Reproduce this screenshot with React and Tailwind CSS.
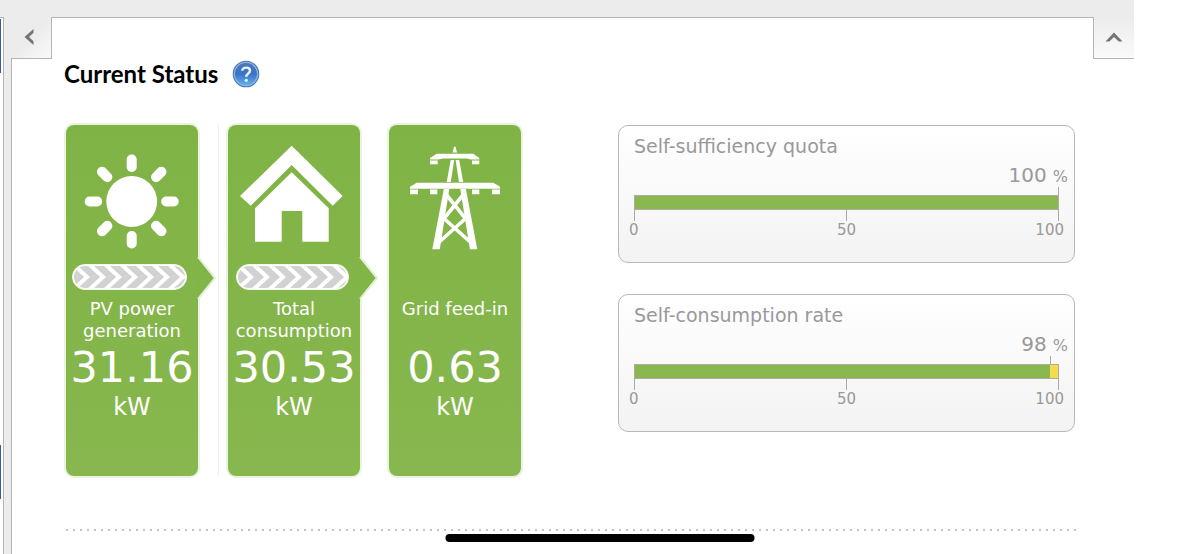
import React from 'react';

const SunIcon = () => (
  <svg viewBox="0 0 132 139" className="w-full" fill="#fff" aria-hidden="true">
    <circle cx="65.7" cy="76.5" r="25.4" />
    {[0, 45, 90, 135, 180, 225, 270, 315].map((angle) => (
      <rect
        key={angle}
        x="60.7"
        y="29.5"
        width="10"
        height="17.5"
        rx="4.8"
        transform={`rotate(${angle} 65.7 76.5)`}
      />
    ))}
  </svg>
);

const HouseIcon = () => (
  <svg viewBox="0 0 132 139" className="w-full" fill="#fff" aria-hidden="true">
    <path d="M63.7 20.7L114.7 71L104.7 80.7L63.7 40L22.7 80.7L12 71Z" />
    <path d="M63.7 47.3L100.7 83.3V116.7H74.3V86H53.7V116.7H27V83.3Z" />
  </svg>
);

const PylonIcon = () => (
  <svg viewBox="0 0 132 139" className="w-full" fill="#fff" aria-hidden="true">
    <path d="M65 21.7H66.6L68 27.5H63.6Z" />
    {/* Cross arms */}
    <path d="M47.7 28.8H84.3L90.3 33V34.6H82L78 33.4H54L49 34.6H41V33Z" />
    <path d="M27.7 57.7H104.3L111 61.7V63.7H21V61.7Z" />
    {/* Insulators */}
    <path d="M41 35.4H48.7V39.3H41ZM83 35.4H90.3V39.3H83Z" />
    <path d="M21 64.6H29V69.3H21ZM41 64.6H48.3V69.3H41ZM83 64.6H90.3V69.3H83ZM103 64.6H111V69.3H103Z" />
    {/* Legs */}
    <path d="M61.7 35H65.2L61.8 57H57.7ZM66.6 35H70.2L74.2 57H70Z" />
    <path d="M54.8 64H60.3L50.8 124.3H43.3ZM71.3 64H76.9L88.3 124.3H80.9Z" />
    <g fill="none" stroke="#fff" strokeWidth="3.6">
      <path d="M58 70.5L76.5 93.5L48 119" />
      <path d="M73.5 70.5L55 93.5L83.5 119" />
    </g>
  </svg>
);

const HelpIcon = () => (
  <svg viewBox="0 0 28 28" className="h-7 w-7" aria-hidden="true">
    <defs>
      <linearGradient id="help-fill" x1="0" y1="0" x2="0" y2="1">
        <stop offset="0" stopColor="#4a78bc" />
        <stop offset="0.5" stopColor="#3a74c4" />
        <stop offset="1" stopColor="#62b2f2" />
      </linearGradient>
    </defs>
    <circle cx="14" cy="14" r="13.3" fill="#4a79b8" />
    <circle cx="14" cy="14" r="11.6" fill="url(#help-fill)" stroke="#8fb4e0" strokeWidth="1.2" />
    <path
      d="M10.3 10.8C10.3 8.7 12 7.6 14.1 7.6C16.4 7.6 18 8.9 18 10.8C18 13.6 14.3 13.5 14.3 16.8"
      fill="none"
      stroke="#e8f0fa"
      strokeWidth="2.4"
    />
    <circle cx="14.3" cy="20.3" r="1.6" fill="#e8f0fa" />
  </svg>
);

const FlowBar = ({ id, className }) => (
  <div className={`h-[26px] overflow-hidden rounded-full border border-[#f4f9ee] bg-white p-px ${className}`}>
    <svg className="h-full w-full rounded-full" aria-hidden="true">
      <defs>
        <pattern id={id} width="16" height="22" patternUnits="userSpaceOnUse">
          <rect width="16" height="22" fill="#fff" />
          <path
            d="M-12 0H-2L10 11L-2 22H-12L0 11ZM4 0H14L26 11L14 22H4L16 11ZM-28 0H-18L-6 11L-18 22H-28L-16 11Z"
            fill="#d2d2d2"
          />
        </pattern>
      </defs>
      <rect width="100%" height="100%" fill={`url(#${id})`} />
    </svg>
  </div>
);

const Pointer = () => (
  <svg viewBox="0 0 20 44" className="absolute left-[131px] top-[131px] h-11 w-5" aria-hidden="true">
    <path d="M1 1L18 22L1 43" fill="#82b548" stroke="#e3efd6" strokeWidth="2" />
    <path d="M0 2L16 22L0 42Z" fill="#82b548" />
  </svg>
);

const PowerCard = ({ icon, label, value, flow, pointer }) => (
  <section className="relative flex w-[132px] flex-col items-center rounded-lg bg-linear-to-b from-[#80b345] to-[#87b74e] pb-[55px] text-center text-white ring-2 ring-[#e9f3de]">
    {pointer && <Pointer />}
    {icon}
    <div className="flex h-[27px] w-full">{flow}</div>
    <h2 className="mt-[7px] h-11 text-[18px] leading-[22px]">{label}</h2>
    <p className="text-[43px] leading-[51px]">{value}</p>
    <p className="text-[24px] leading-7">kW</p>
  </section>
);

const Gauge = ({ title, value }) => (
  <section className="rounded-[10px] border border-[#b8b8b8] bg-linear-to-b from-white to-[#f3f3f3] px-[15px] pb-[23px] pt-[9px] text-[#999]">
    <h2 className="text-[19px] leading-[22px]">{title}</h2>
    <p className="-mr-[9px] mt-2 flex items-baseline justify-end gap-[6px] leading-5">
      <span className="text-[20px]">{value}</span>
      <span className="text-[16px]">%</span>
    </p>
    <div className="h-2 border-r border-[#aaa]" style={{ width: `${value}%` }} />
    <div
      role="meter"
      aria-label={title}
      aria-valuenow={value}
      aria-valuemin={0}
      aria-valuemax={100}
      className="h-[15px] border border-[#b0aaa0] bg-[#f5dc4e]"
    >
      <div className="h-full bg-[#88b84f]" style={{ width: `${value}%` }} />
    </div>
    <div className="flex h-[11px] border-x border-[#aaa]">
      <div className="w-1/2 border-r border-[#aaa]" />
    </div>
    <div className="-mx-[5px] grid grid-cols-3 text-[15px] leading-[18px]">
      <span>0</span>
      <span className="text-center">50</span>
      <span className="text-right">100</span>
    </div>
  </section>
);

const App = () => {
  return (
    <div className="flex min-h-screen flex-col bg-white font-['DejaVu_Sans',Verdana,sans-serif]">
      <div className="mr-[66px] h-[17px] bg-[#ececec]" />

      <div className="flex flex-1">
        {/* Edge of the neighbouring panel */}
        <div className="flex w-1 flex-col border-r border-t border-[#b5b5b5] pt-px">
          <div className="h-[54px] w-px bg-[#3b5a94]" />
          <div className="mt-[372px] h-[54px] w-px bg-[#3b5a94]" />
        </div>
        <div className="w-[7px] bg-[#ececec]" />

        <main className="flex flex-1 flex-col">
          <div className="mr-[66px] flex h-[42px]">
            <button
              type="button"
              aria-label="Previous"
              className="flex w-[41px] items-center justify-center border-b border-r border-[#b5b5b5] bg-linear-to-br from-[#ececec] from-50% to-[#fafafa] pb-[2px] pr-1"
            >
              <svg viewBox="0 0 12 18" className="h-[18px] w-3" aria-hidden="true">
                <path d="M10.5 1L1.5 9L10.5 17V13.2L6 9L10.5 4.8Z" fill="#747474" />
              </svg>
            </button>
            <div className="flex-1 border-t border-[#b5b5b5]" />
            <button
              type="button"
              aria-label="Collapse"
              className="flex w-[41px] items-center justify-center border-b border-l border-[#b5b5b5] bg-linear-to-b from-[#ececec] to-[#fafafa] pb-[2px]"
            >
              <svg viewBox="0 0 18 12" className="h-3 w-[18px]" aria-hidden="true">
                <path d="M0.5 10.5L9 1.5L17.5 10.5H13.7L9 6L4.3 10.5Z" fill="#747474" />
              </svg>
            </button>
          </div>

          <div className="flex-1 border-l border-[#b5b5b5] pl-[54px] pr-[120px]">
            <div className="-ml-[2px] flex items-center gap-[14px] pt-px">
              <h1 className="font-['Lato',sans-serif] text-[24px] font-bold leading-7 text-black">Current Status</h1>
              <button type="button" aria-label="Help">
                <HelpIcon />
              </button>
            </div>

            <div className="mt-[37px] flex items-start gap-[97px] pr-[5px]">
              <div className="flex">
                <PowerCard
                  icon={<SunIcon />}
                  label="PV power generation"
                  value="31.16"
                  flow={<FlowBar id="flow-pv" className="ml-[6px] w-[115px]" />}
                  pointer
                />
                <div className="ml-5 mr-[9px] w-px bg-[#efefef]" />
                <PowerCard
                  icon={<HouseIcon />}
                  label="Total consumption"
                  value="30.53"
                  flow={<FlowBar id="flow-home" className="ml-2 w-[113px]" />}
                  pointer
                />
                <div className="w-[29px]" />
                <PowerCard icon={<PylonIcon />} label="Grid feed-in" value="0.63" />
              </div>

              <div className="flex flex-1 flex-col gap-[31px]">
                <Gauge title="Self-sufficiency quota" value={100} />
                <Gauge title="Self-consumption rate" value={98} />
              </div>
            </div>

            <svg className="mt-[53px] h-[2px] w-full" aria-hidden="true">
              <line x1="0" y1="1" x2="100%" y2="1" stroke="#c4c4c4" strokeWidth="2" strokeDasharray="2 5" />
            </svg>
          </div>
        </main>
      </div>

      {/* Home indicator */}
      <div className="fixed bottom-3 left-1/2 h-2 w-[309px] -translate-x-1/2 rounded-full bg-black" />
    </div>
  );
};

export default App;
